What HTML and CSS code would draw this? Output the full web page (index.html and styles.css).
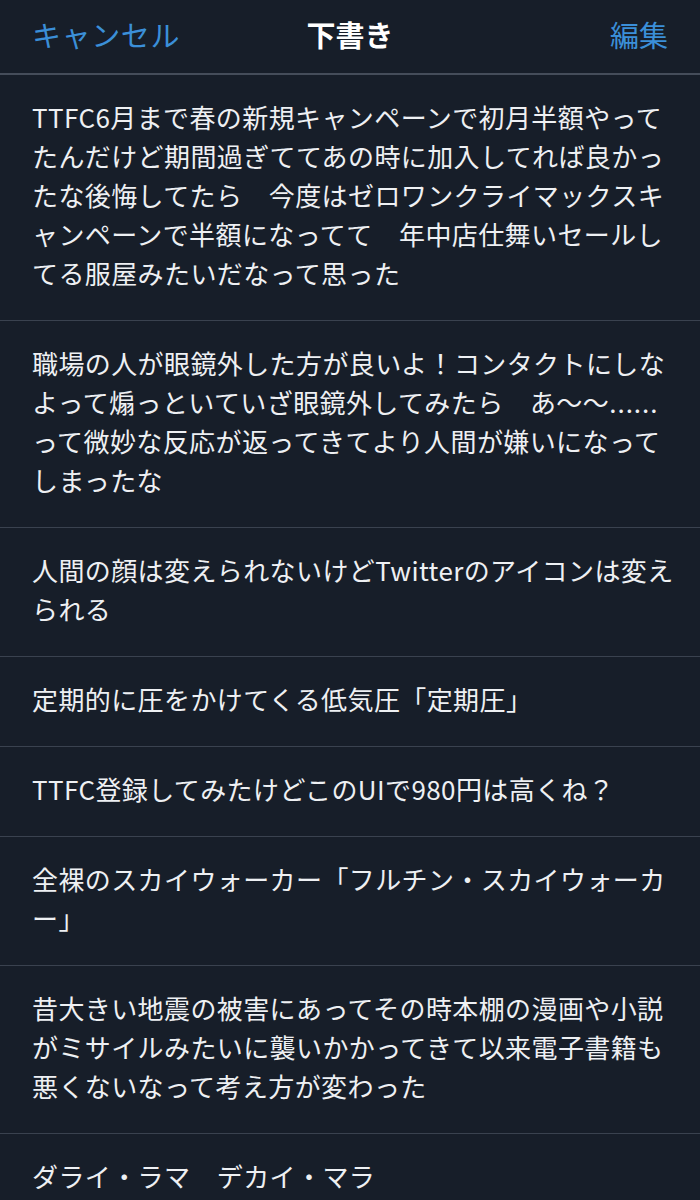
FILE: index.html
```html
<!DOCTYPE html>
<html lang="ja">
<head>
<meta charset="utf-8">
<title>下書き</title>
<link rel="stylesheet" href="styles.css">
</head>
<body>
<div class="screen">
  <header class="nav">
    <span class="nav-btn nav-left">キャンセル</span>
    <span class="nav-title">下書き</span>
    <span class="nav-btn nav-right">編集</span>
  </header>
  <ul class="drafts">
    <li class="draft">TTFC6月まで春の新規キャンペーンで初月半額やって<br>たんだけど期間過ぎててあの時に加入してれば良かっ<br>たな後悔してたら　今度はゼロワンクライマックスキ<br>ャンペーンで半額になってて　年中店仕舞いセールし<br>てる服屋みたいだなって思った</li>
    <li class="draft">職場の人が眼鏡外した方が良いよ！コンタクトにしな<br>よって煽っといていざ眼鏡外してみたら　あ〜〜<span class="dots">......</span><br>って微妙な反応が返ってきてより人間が嫌いになって<br>しまったな</li>
    <li class="draft">人間の顔は変えられないけどTwitterのアイコンは変え<br>られる</li>
    <li class="draft">定期的に圧をかけてくる低気圧「定期圧」</li>
    <li class="draft">TTFC登録してみたけどこのUIで980円は高くね？</li>
    <li class="draft">全裸のスカイウォーカー「フルチン・スカイウォーカ<br>ー」</li>
    <li class="draft">昔大きい地震の被害にあってその時本棚の漫画や小説<br>がミサイルみたいに襲いかかってきて以来電子書籍も<br>悪くないなって考え方が変わった</li>
    <li class="draft">ダライ・ラマ　デカイ・マラ</li>
  </ul>
</div>
</body>
</html>
```

FILE: styles.css
```css
html, body {
  margin: 0;
  padding: 0;
  background: #171e29;
}
body {
  font-family: "Noto Sans CJK JP", "Noto Sans", "Liberation Sans", sans-serif;
  color: #eef0f3;
  width: 700px;
  height: 1200px;
  overflow: hidden;
}
.screen {
  display: flex;
  flex-direction: column;
}
.nav {
  display: grid;
  grid-template-columns: 1fr auto 1fr;
  align-items: center;
  height: 73px;
  padding: 0 32px;
  border-bottom: 2px solid #454d5a;
  box-sizing: content-box;
  font-size: 29px;
}
.nav-btn {
  color: #3b8fd8;
  font-weight: 400;
  margin-top: -6px;
}
.nav-left { justify-self: start; letter-spacing: 0.6px; }
.nav-right { justify-self: end; }
.nav-title {
  font-weight: 700;
  color: #ffffff;
  margin-top: -6px;
}
.drafts {
  list-style: none;
  margin: 0;
  padding: 0;
}
.draft {
  padding: 22px 28px 28px 32px;
  border-bottom: 1px solid #3a424f;
  font-size: 26px;
  line-height: 39px;
  white-space: nowrap;
  letter-spacing: 0.4px;
}
.dots {
  letter-spacing: 1px;
}
```
